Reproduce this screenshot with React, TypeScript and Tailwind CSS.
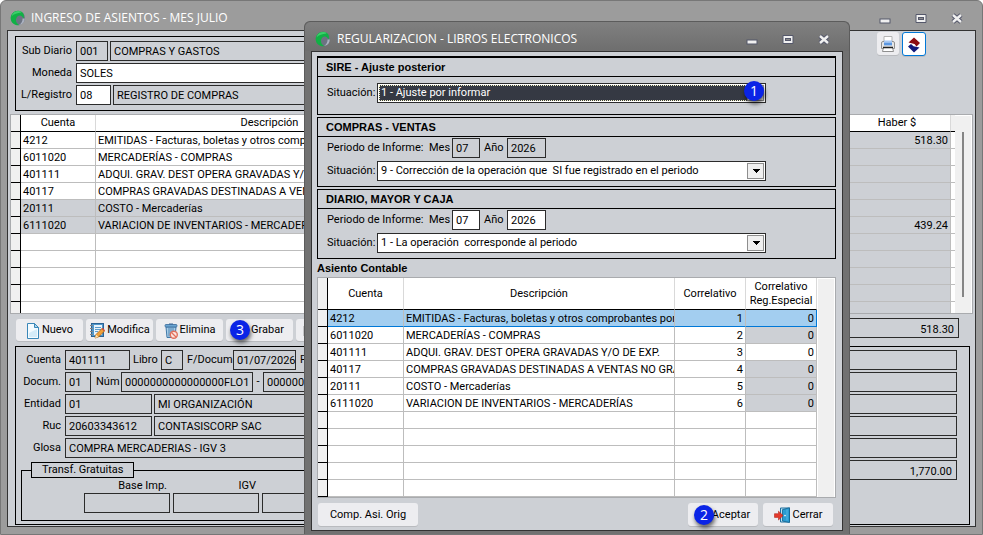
import React, { useState } from 'react';
import { clsx } from 'clsx';

interface Account {
  code: string;
  name: string;
  haber?: string;
  shaded?: boolean;
  regShaded?: boolean;
}

const ACCOUNTS: Account[] = [
  { code: '4212', name: 'EMITIDAS - Facturas, boletas y otros comprobantes por pagar', haber: '518.30' },
  { code: '6011020', name: 'MERCADERÍAS - COMPRAS', regShaded: true },
  { code: '401111', name: 'ADQUI. GRAV. DEST OPERA GRAVADAS Y/O DE EXP.' },
  { code: '40117', name: 'COMPRAS GRAVADAS DESTINADAS A VENTAS NO GRAVADAS', regShaded: true },
  { code: '20111', name: 'COSTO - Mercaderías', shaded: true, regShaded: true },
  { code: '6111020', name: 'VARIACION DE INVENTARIOS - MERCADERÍAS', haber: '439.24', shaded: true, regShaded: true },
];

const EMPTY_ROWS = [0, 1, 2, 3, 4];

function Logo() {
  return (
    <svg className="size-4 shrink-0" viewBox="0 0 16 16">
      <circle cx="8" cy="8" r="7" fill="#6c7382" />
      <path d="M14.8 8.5Q14.5 14 9 15Q12.6 12.6 12.6 8.5Z" fill="#aab1c0" />
      <path d="M12 2A7.3 7.3 0 1 0 9.5 15.2Q5.4 13 6.1 9Q7 5.2 10.2 5.5Q12.6 6 13.4 8.6Q15 4.6 12 2Z" fill="#10b145" />
      <path d="M10.5 1.3A7 7 0 0 0 1.4 6.5Q5 3 11.5 2.6Z" fill="#3ccf6b" />
    </svg>
  );
}

function WindowControls() {
  return (
    <div className="flex items-center gap-6">
      <button type="button" aria-label="Minimizar" className="flex h-3 w-3 items-end">
        <svg viewBox="0 0 12 12" className="size-3">
          <rect x="1" y="7" width="10" height="4" fill="#f0f0f0" stroke="#55586b" />
        </svg>
      </button>
      <button type="button" aria-label="Maximizar" className="size-3">
        <svg viewBox="0 0 12 12" className="size-3">
          <path d="M1 2.5H11V10.5H1Z" fill="#f0f0f0" stroke="#55586b" />
          <rect x="3.5" y="5.5" width="5" height="2" fill="#8a8a8a" stroke="#55586b" />
        </svg>
      </button>
      <button type="button" aria-label="Cerrar ventana" className="size-3">
        <svg viewBox="0 0 12 12" className="size-3">
          <path d="M2 3L10 10M10 3L2 10" stroke="#55586b" strokeWidth="4.4" />
          <path d="M2 3L10 10M10 3L2 10" stroke="#f0f0f0" strokeWidth="2.4" />
        </svg>
      </button>
    </div>
  );
}

function Field({ label, value, className }: { label: string; value: string; className?: string }) {
  return (
    <input
      aria-label={label}
      defaultValue={value}
      className={clsx('h-5 min-w-0 rounded-none border border-[#2b2b2b] pt-0.5 pl-[3px] outline-none', className)}
    />
  );
}

function Combo({ id, value, active }: { id: string; value: string; active?: boolean }) {
  return (
    <div className="relative h-5 w-[389px] border border-[#2b2b2b] bg-white p-px">
      <select
        id={id}
        className={clsx(
          'block h-4 w-full appearance-none rounded-none outline-none',
          active ? 'border border-dotted border-[#f5f5c8] bg-[#353943] px-px leading-[14px] text-white' : 'bg-white px-0.5 leading-4 text-black',
        )}
      >
        <option>{value}</option>
      </select>
      <span className="pointer-events-none absolute top-px right-px flex h-4 w-[17px] items-center justify-center border border-[#8e8e8e] bg-[#f0f0f0]">
        <svg viewBox="0 0 8 4" className="h-1 w-2" shapeRendering="crispEdges">
          <path d="M0 0H8L4 4Z" fill="#000" />
        </svg>
      </span>
    </div>
  );
}

function Badge({ n, className }: { n: number; className: string }) {
  return (
    <span
      className={clsx(
        'pointer-events-none absolute z-10 flex size-5 items-center justify-center rounded-full bg-[#0a24e6] font-["Open_Sans",sans-serif] text-[14px] leading-5 text-white shadow-[1px_3px_4px_rgba(0,0,0,0.6)]',
        className,
      )}
    >
      {n}
    </span>
  );
}

function ToolButton({ className, children, ...rest }: React.ButtonHTMLAttributes<HTMLButtonElement>) {
  return (
    <button
      type="button"
      className={clsx(
        'relative flex shrink-0 items-center justify-center gap-0.5 rounded-[3px] bg-[#ededf0] pt-px shadow-[0_1px_0_#b9bbbf]',
        className,
      )}
      {...rest}
    >
      {children}
    </button>
  );
}

function PageIcon() {
  return (
    <svg viewBox="0 0 14 16" className="h-4 w-3.5">
      <path d="M1.5.5H8.5L12.5 4.5V15.5H1.5Z" fill="#f4fbff" stroke="#3a87b8" />
      <path d="M3 10L11 6V14H3Z" fill="#d5ecf9" />
      <path d="M8.5.5V4.5H12.5Z" fill="#a9d5ee" stroke="#3a87b8" />
    </svg>
  );
}

function NotebookIcon() {
  return (
    <svg viewBox="0 0 16 16" className="size-4">
      <rect x="2.5" y=".5" width="12" height="13" fill="#4f97cc" stroke="#2a6294" />
      <rect x="5" y="2" width="8" height="10" fill="#e8f3fb" />
      <path d="M6 4.5H12M6 6.5H12M6 8.5H9" stroke="#5a9bcb" />
      <path d="M1 2.5H4M1 5.5H4M1 8.5H4M1 11.5H4" stroke="#7e858c" />
      <path d="M6 15L7 11.5L13 5.5L15.5 8L9.5 14Z" fill="#f0a038" stroke="#a86216" strokeWidth=".8" />
      <path d="M6 15L7 11.5L9.5 14Z" fill="#fbe3b6" />
      <path d="M12.6 5.8L13.6 4.8L16 7.2L15.2 8.2Z" fill="#d94b3b" />
    </svg>
  );
}

function TrashIcon() {
  return (
    <svg viewBox="0 0 14 16" className="h-4 w-3.5">
      <path d="M2 4H12L11 14.5H3Z" fill="#a9cde8" stroke="#4179a8" />
      <path d="M5 5V13.5M7 5V13.5M9 5V13.5" stroke="#4f87b4" />
      <rect x="1" y="1.5" width="12" height="2.5" rx="1" fill="#6ba6d2" stroke="#38699a" strokeWidth=".8" />
      <path d="M5 1H9" stroke="#38699a" />
      <circle cx="9.8" cy="11.7" r="3.5" fill="#fbe4df" stroke="#e0705c" strokeWidth="1.4" />
      <path d="M7.5 9.5L12 14" stroke="#e0705c" strokeWidth="1.3" />
    </svg>
  );
}

function DoorIcon() {
  return (
    <svg viewBox="0 0 17 16" className="h-4 w-[17px]">
      <path d="M6.5 1H15.5V15H6.5Z" fill="#bfe3f5" stroke="#1d6f9e" />
      <path d="M8.5 2.6L15.5.8V15.5L8.5 14Z" fill="#2b9bd2" stroke="#12628f" strokeWidth=".8" />
      <path d="M13 2.5V13.5" stroke="#56b8e4" />
      <circle cx="11" cy="8.6" r=".8" fill="#fff" />
      <path d="M.5 6.7H4.5V4.2L9 8.6L4.5 13V10.4H.5Z" fill="#e5392b" stroke="#b3261b" strokeWidth=".6" />
    </svg>
  );
}

function PrinterIcon() {
  return (
    <svg viewBox="0 0 16 16" className="size-4">
      <path d="M4 6V.5H12V6" fill="#fff" stroke="#b4b4b4" />
      <path d="M1.5 7Q1.5 5.5 3 5.5H13Q14.5 5.5 14.5 7V12.5H1.5Z" fill="#e6e6e6" stroke="#8f8f8f" />
      <rect x="4" y="4.8" width="8" height="4.6" fill="#5c97e0" />
      <rect x="4" y="4.8" width="8" height="2" fill="#a9c8f2" />
      <path d="M3.5 11.5H12.5L13.5 15.5H2.5Z" fill="#fff" stroke="#8f8f8f" />
      <path d="M3 11.5H13" stroke="#222" strokeWidth="1.4" />
    </svg>
  );
}

function FlipIcon() {
  return (
    <svg viewBox="0 0 14 16" className="h-4 w-3.5">
      <path d="M7 .5L13 6L9.5 9.5L7.5 7L1.5 5.5Z" fill="#8c0d12" />
      <path d="M1 9.5L4 7L6.5 9.2L12.5 10.6L7 15.5Z" fill="#131a7c" />
    </svg>
  );
}

const cell = 'h-[17px] overflow-hidden border-r border-b border-[#bdbdbd] p-0 px-0.5 pt-px leading-[15px] whitespace-nowrap';
const marker = 'h-[17px] border-r border-b border-black bg-[#f0f0f0] p-0';

function EntryTable() {
  return (
    <div className="mx-0.5 mt-[3px] flex h-[200px] overflow-hidden border border-[#a9abae] bg-white">
      <div className="min-w-0 flex-1">
        <table className="w-full table-fixed border-separate border-spacing-0">
          <colgroup>
            <col className="w-[10px]" />
            <col className="w-[75px]" />
            <col className="w-[348px]" />
            <col />
            <col className="w-[107px]" />
            <col className="w-[4px]" />
          </colgroup>
          <thead>
            <tr className="h-[17px]">
              <th className="border-r border-b border-black bg-[#f0f0f0] p-0" />
              {['Cuenta', 'Descripción', '', 'Haber $'].map((h) => (
                <th key={h} className="border-r border-b border-r-[#d9d9d9] border-b-black p-0 leading-4 font-normal">{h}</th>
              ))}
              <th className="border-b border-black bg-[#f0f0f0] p-0" />
            </tr>
          </thead>
          <tbody>
            {ACCOUNTS.map((a) => (
              <tr key={a.code} className={a.shaded ? 'bg-[#cdd0d5]' : 'bg-white'}>
                <td className={marker} />
                <td className={cell}>{a.code}</td>
                <td className={cell}>{a.name}</td>
                <td className={clsx(cell, 'bg-[#cdd0d5]')} />
                <td className={clsx(cell, 'bg-[#cdd0d5] text-right')}>{a.haber}</td>
                <td className="border-b border-[#bdbdbd] bg-white p-0" />
              </tr>
            ))}
            {EMPTY_ROWS.map((r) => (
              <tr key={r}>
                <td className={marker} />
                <td className={cell} />
                <td className={cell} />
                <td className={clsx(cell, 'bg-[#cdd0d5]')} />
                <td className={clsx(cell, 'bg-[#cdd0d5]')} />
                <td className="border-b border-[#bdbdbd] bg-white p-0" />
              </tr>
            ))}
          </tbody>
        </table>
      </div>
      {/* scroll track */}
      <div className="mt-px mr-px w-4 bg-[#f0f0f0] pt-4">
        <div className="mx-auto h-[165px] w-0.5 bg-[#858585]" />
      </div>
    </div>
  );
}

function CorrelativeTable() {
  const [selected, setSelected] = useState(0);
  return (
    <div className="mt-px flex border border-[#a9abae] bg-white">
      <div className="min-w-0 flex-1">
        <table className="w-full table-fixed border-separate border-spacing-0">
          <colgroup>
            <col className="w-[10px]" />
            <col className="w-[76px]" />
            <col />
            <col className="w-[71px]" />
            <col className="w-[71px]" />
          </colgroup>
          <thead>
            <tr className="h-8">
              <th className="border-r border-b border-black bg-[#f0f0f0] p-0" />
              {['Cuenta', 'Descripción', 'Correlativo', 'Correlativo Reg.Especial'].map((h) => (
                <th key={h} className="border-r border-b border-r-[#d9d9d9] border-b-black p-0 leading-[14px] font-normal">{h}</th>
              ))}
            </tr>
          </thead>
          <tbody>
            {ACCOUNTS.map((a, i) => {
              const on = i === selected;
              const line = on && 'border-b-[#0078d7] bg-[#a3cef0]';
              return (
                <tr key={a.code} onClick={() => setSelected(i)}>
                  <td className={marker} />
                  <td className={clsx(cell, line)}>{a.code}</td>
                  <td className={clsx(cell, line)}>{a.name}</td>
                  <td className={clsx(cell, line, 'text-right')}>{i + 1}</td>
                  <td className={clsx(cell, 'text-right', on ? 'border-r-[#0078d7] border-b-[#0078d7] bg-[#a3cef0]' : a.regShaded && 'bg-[#cdd0d5]')}>0</td>
                </tr>
              );
            })}
            {EMPTY_ROWS.map((r) => (
              <tr key={r}>
                <td className={marker} />
                <td className={cell} />
                <td className={cell} />
                <td className={cell} />
                <td className={cell} />
              </tr>
            ))}
          </tbody>
        </table>
      </div>
      <div className="mt-px mr-px ml-px w-4 bg-[#f0f0f0]" />
    </div>
  );
}

const heading = "font-['Liberation_Sans',sans-serif] font-bold";

function Group({ title, children, className }: { title: string; children: React.ReactNode; className?: string }) {
  return (
    <section className={clsx('border border-black', className)}>
      <h2 className={clsx(heading, 'h-[19px] border-b border-black pl-2 leading-[18px]')}>{title}</h2>
      {children}
    </section>
  );
}

function Period({ shaded }: { shaded?: boolean }) {
  const tone = shaded ? 'bg-transparent' : 'bg-white';
  return (
    <div className="flex h-5 pl-[9px] leading-5">
      <span className="w-[102px]">Periodo de Informe:</span>
      <span className="w-[23px]">Mes</span>
      <Field label="Mes" value="07" className={clsx('w-7', tone)} />
      <span className="ml-1 w-[23px]">Año</span>
      <Field label="Año" value="2026" className={clsx('w-[39px]', tone)} />
    </div>
  );
}

function Situation({ id, value, active }: { id: string; value: string; active?: boolean }) {
  return (
    <div className="flex h-5 pl-[9px] leading-5">
      <label htmlFor={id} className="w-[50px] shrink-0">Situación:</label>
      <Combo id={id} value={value} active={active} />
    </div>
  );
}

function RegularizacionDialog() {
  return (
    <div role="dialog" aria-label="Regularización" className="absolute top-5 bottom-0 left-[303px] flex w-[546px] flex-col rounded-t-md border border-b-0 border-[#5c5c5c] bg-[#717171] px-[6px] pb-[3px]">
      <header className="-mx-[6px] flex h-[29px] items-center justify-between rounded-t-md bg-gradient-to-b from-[#808080] to-[#6e6e6e] pt-1 pr-[19px] pl-[10px]">
        <div className="flex items-center gap-[6px]">
          <Logo />
          <h1 className="font-['Open_Sans','Noto_Sans',sans-serif] text-[12px] leading-5 text-white">REGULARIZACION - LIBROS ELECTRONICOS</h1>
        </div>
        <WindowControls />
      </header>
      <div className="flex-1 border border-[#333] bg-[#cdd0d5] pt-1 pr-[6px] pl-[5px]">
        <Group title="SIRE - Ajuste posterior" className="h-[59px] border-t-2">
          <div className="relative pt-[6px]">
            <Situation id="sit-sire" value="1 - Ajuste por informar" active />
            <Badge n={1} className="top-1 left-[426px]" />
          </div>
        </Group>
        <Group title="COMPRAS - VENTAS" className="mt-0.5 h-[70px]">
          <div className="flex flex-col gap-[3px] pt-px">
            <Period shaded />
            <Situation id="sit-compras" value={'9 - Corrección de la operación que \u00a0SI fue registrado en el periodo'} />
          </div>
        </Group>
        <Group title="DIARIO, MAYOR Y CAJA" className="mt-0.5 h-[70px]">
          <div className="flex flex-col gap-[3px] pt-px">
            <Period />
            <Situation id="sit-diario" value={'1 - La operación \u00a0corresponde al periodo'} />
          </div>
        </Group>
        <h2 className={clsx(heading, 'mt-px leading-4')}>Asiento Contable</h2>
        <CorrelativeTable />
        <div className="mt-[5px] flex gap-[5px] px-px">
          <ToolButton className="mr-auto h-[23px] w-[100px]">Comp. Asi. Orig</ToolButton>
          <ToolButton className="h-[23px] w-[70px] pl-4">
            <Badge n={2} className="top-[2px] left-[6px]" />
            Aceptar
          </ToolButton>
          <ToolButton className="mr-0.5 h-[23px] w-[70px]">
            <DoorIcon />
            Cerrar
          </ToolButton>
        </div>
      </div>
    </div>
  );
}

function HeaderPanel() {
  const label = 'w-[60px] pr-1 text-right';
  return (
    <div className="flex justify-between">
      <div className="mt-[5px] ml-[7px] flex w-[440px] flex-col gap-0.5 border border-black pt-1 pb-[5px] leading-5">
        <div className="flex">
          <span className={label}>Sub Diario</span>
          <Field label="Sub Diario" value="001" className="w-8" />
          <Field label="Nombre sub diario" value="COMPRAS Y GASTOS" className="ml-0.5 flex-1" />
        </div>
        <div className="flex">
          <span className={label}>Moneda</span>
          <Field label="Moneda" value="SOLES" className="flex-1 bg-white" />
        </div>
        <div className="flex">
          <span className={label}>L/Registro</span>
          <Field label="L/Registro" value="08" className="w-[35px] bg-white" />
          <Field label="Nombre registro" value="REGISTRO DE COMPRAS" className="ml-0.5 flex-1" />
        </div>
      </div>
      <div className="mt-px mr-[49px] flex h-fit gap-[3px]">
        <ToolButton aria-label="Imprimir" className="h-[23px] w-[22px]"><PrinterIcon /></ToolButton>
        <ToolButton aria-label="Cambiar" className="h-6 w-6 border border-[#0078d7] bg-white"><FlipIcon /></ToolButton>
      </div>
    </div>
  );
}

function DetailPanel() {
  const label = 'w-[49px] pr-1 text-right';
  return (
    <div className="mt-[5px] mr-[5px] ml-[7px] flex h-[179px] justify-between border border-black pt-[3px] pr-3">
      <div className="flex w-[480px] flex-col gap-0.5 leading-5">
        <div className="flex">
          <span className={label}>Cuenta</span>
          <Field label="Cuenta" value="401111" className="w-[65px]" />
          <span className="w-[31px] pl-[3px]">Libro</span>
          <Field label="Libro" value="C" className="w-[22px]" />
          <span className="w-[50px] pl-1">F/Docum</span>
          <Field label="F/Docum" value="01/07/2026" className="w-[63px]" />
          <span className="pl-1">F</span>
        </div>
        <div className="flex">
          <span className={label}>Docum.</span>
          <Field label="Docum." value="01" className="w-[26px]" />
          <span className="w-[30px] pl-[5px]">Núm</span>
          <Field label="Serie" value="0000000000000000FLO1" className="w-[132px]" />
          <span className="w-[10px] text-center">-</span>
          <Field label="Número" value="0000000000" className="w-[110px]" />
        </div>
        <div className="flex">
          <span className={label}>Entidad</span>
          <Field label="Entidad" value="01" className="w-[87px]" />
          <Field label="Nombre entidad" value="MI ORGANIZACIÓN" className="ml-0.5 flex-1" />
        </div>
        <div className="flex">
          <span className={label}>Ruc</span>
          <Field label="Ruc" value="20603343612" className="w-[87px]" />
          <Field label="Razón social" value="CONTASISCORP SAC" className="ml-0.5 flex-1" />
        </div>
        <div className="flex">
          <span className={label}>Glosa</span>
          <Field label="Glosa" value="COMPRA MERCADERIAS - IGV 3" className="flex-1" />
        </div>
        <fieldset className="mt-0.5 ml-[5px] h-[59px] border border-black">
          <legend className="ml-[9px] h-4 border border-black px-[10px] leading-[14px]">Transf. Gratuitas</legend>
          <div className="flex gap-[3px] pl-[62px]">
            {['Base Imp.', 'IGV', ''].map((name) => (
              <label key={name} className="flex w-[86px] flex-col">
                <span className="h-[15px] pr-[3px] text-right leading-[15px]">{name}</span>
                <Field label={name} value="" className="w-full" />
              </label>
            ))}
          </div>
        </fieldset>
      </div>
      <div className="flex w-[130px] flex-col gap-0.5">
        {['', '', '', '', '', '1,770.00'].map((v, i) => (
          <Field key={i} label={`Importe ${i + 1}`} value={v} className="pr-1 text-right" />
        ))}
      </div>
    </div>
  );
}

export default function App() {
  return (
    <main className="relative flex min-h-screen flex-col overflow-hidden rounded-t-md border border-[#777] bg-[#9c9c9c] px-[6px] pb-[7px] font-[Roboto,'Liberation_Sans',sans-serif] text-[11px] text-black">
      <header className="flex h-[29px] items-center justify-between pt-[5px] pr-[13px] pl-[3px]">
        <div className="flex items-center gap-[5px]">
          <Logo />
          <h1 className="font-['Open_Sans','Noto_Sans',sans-serif] text-[12px] leading-5 text-white">INGRESO DE ASIENTOS - MES JULIO</h1>
        </div>
        <WindowControls />
      </header>
      <div className="flex-1 border border-[#333] bg-[#cdd0d5]">
        <HeaderPanel />
        <EntryTable />
        <div className="mt-1 flex justify-between">
          <div className="mt-px ml-2 flex gap-[3px]">
            <ToolButton className="h-[22px] w-[67px]"><PageIcon />Nuevo</ToolButton>
            <ToolButton className="h-[22px] w-[67px]"><NotebookIcon />Modifica</ToolButton>
            <ToolButton className="h-[22px] w-[67px]"><TrashIcon />Elimina</ToolButton>
            <ToolButton className="h-[22px] w-[67px] pl-4">
              <Badge n={3} className="top-px left-1" />
              Grabar
            </ToolButton>
            <ToolButton aria-label="Cancelar" disabled className="h-[22px] w-[67px]">
              <span className="mr-auto ml-[7px] h-2.5 w-4 bg-[#c4c4c6]" />
            </ToolButton>
          </div>
          <Field label="Total Haber $" value="518.30" className="mr-4 w-[130px] pr-1 text-right" />
        </div>
        <DetailPanel />
      </div>
      <RegularizacionDialog />
    </main>
  );
}
